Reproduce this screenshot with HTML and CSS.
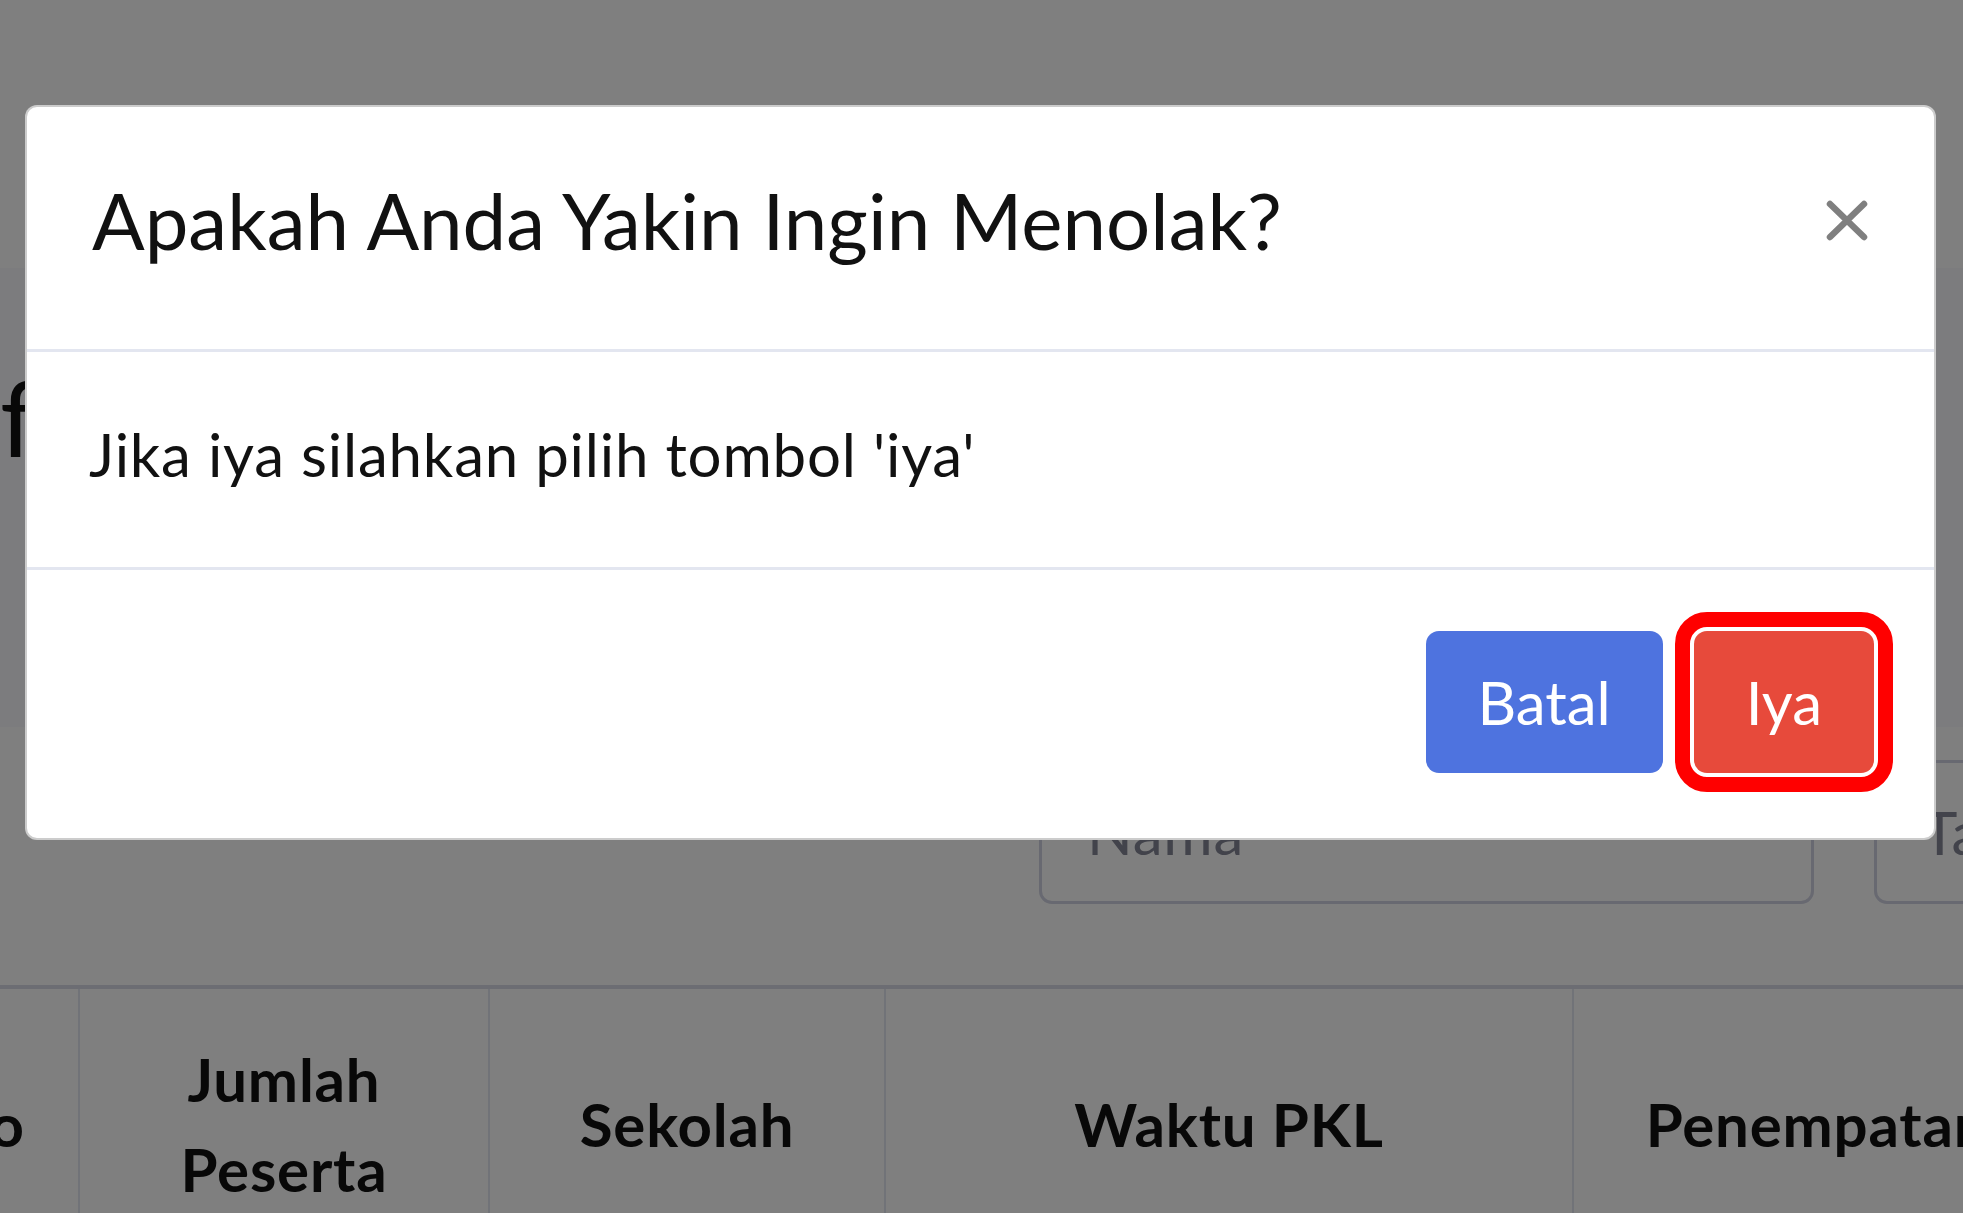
FILE: index.html
```html
<!DOCTYPE html>
<html>
<head>
    <title>Data Pengajuan PKL</title>
    <link rel="stylesheet" href="styles.css">
</head>
<body>
    <div class="topbar"></div>
    <div class="content">
        <h1 class="page-title">f</h1>
    </div>
    <div class="card">
        <div class="filters">
            <input type="text" class="form-control" placeholder="Nama">
            <input type="text" class="form-control" placeholder="Tanggal">
        </div>
        <table class="table">
            <thead>
                <tr>
                    <th class="col-no">No</th>
                    <th class="col-jumlah">Jumlah Peserta</th>
                    <th class="col-sekolah">Sekolah</th>
                    <th class="col-waktu">Waktu PKL</th>
                    <th class="col-penempatan">Penempatan</th>
                </tr>
            </thead>
        </table>
    </div>

    <div class="backdrop"></div>

    <div class="modal">
        <div class="modal-dialog">
            <div class="modal-content">
                <div class="modal-header">
                    <h5 class="modal-title">Apakah Anda Yakin Ingin Menolak?</h5>
                    <button type="button" class="close" aria-label="Close">
                        <svg width="42" height="41" viewBox="0 0 42 41">
                            <path d="M4 4 L38 37 M38 4 L4 37" stroke="#7f7f7f" stroke-width="6.5" stroke-linecap="round" fill="none"/>
                        </svg>
                    </button>
                </div>
                <div class="modal-body">Jika iya silahkan pilih tombol 'iya'</div>
                <div class="modal-footer">
                    <button type="button" class="btn btn-primary">Batal</button>
                    <button type="button" class="btn btn-danger btn-marked">Iya</button>
                </div>
            </div>
        </div>
    </div>
</body>
</html>
```

FILE: styles.css
```css
body {
    margin: 0;
    font-family: 'Lato', 'Open Sans', sans-serif;
    background-color: #f8f9fc;
    overflow: hidden;
    height: 1213px;
}

.topbar {
    height: 268px;
    background-color: #fff;
}

.content {
    height: 459px;
    background-color: #f8f9fc;
}

.page-title {
    margin: 0;
    padding-top: 85px;
    font-size: 105px;
    font-weight: 400;
    line-height: 1.2;
    color: #111;
}

.card {
    background-color: #fff;
    padding-top: 33px;
    height: 453px;
}

.filters {
    display: flex;
    gap: 60px;
    padding-left: 1039px;
}

.form-control {
    flex: none;
    width: 775px;
    height: 144px;
    box-sizing: border-box;
    padding: 0 45px;
    font-family: inherit;
    font-size: 60px;
    letter-spacing: 0.8px;
    border: 3px solid #d1d3e2;
    border-radius: 13px;
    background-color: #fff;
}

.form-control::placeholder {
    color: #858796;
}

.table {
    margin-top: 81px;
    margin-left: -112px;
    border-collapse: collapse;
    table-layout: fixed;
    width: 2172px;
}

.table th {
    box-sizing: border-box;
    padding: 45px;
    font-size: 60px;
    font-weight: 700;
    letter-spacing: 0.8px;
    line-height: 1.5;
    color: #111;
    text-align: center;
    vertical-align: middle;
    border-top: 4px solid #d9dbe6;
    border-left: 2px solid #e3e6f0;
    border-right: 2px solid #e3e6f0;
}

.col-no { width: 190px; }
.col-jumlah { width: 410px; }
.col-sekolah { width: 396px; }
.col-waktu { width: 688px; }
.col-penempatan { width: 488px; }

.backdrop {
    position: fixed;
    inset: 0;
    background-color: rgba(0, 0, 0, 0.5);
}

.modal {
    position: fixed;
    inset: 0;
}

.modal-dialog {
    margin: 105px 27px 0 25px;
}

.modal-content {
    background-color: #fff;
    border: 2px solid rgba(0, 0, 0, 0.2);
    border-radius: 12px;
}

.modal-header {
    display: flex;
    align-items: center;
    justify-content: space-between;
    padding: 55px 66px 70px 65px;
    border-bottom: 3px solid #e3e6f0;
}

.modal-title {
    margin: 0;
    font-size: 78px;
    font-weight: 400;
    line-height: 1.5;
    color: #111;
}

.close {
    padding: 0;
    border: none;
    background: none;
    display: flex;
    cursor: pointer;
}

.modal-body {
    padding: 57px 62px 68px;
    font-size: 60px;
    letter-spacing: 0.8px;
    line-height: 1.5;
    color: #111;
    border-bottom: 3px solid #e3e6f0;
}

.modal-footer {
    display: flex;
    justify-content: flex-end;
    gap: 31px;
    padding: 61px 60px 65px;
}

.btn {
    height: 142px;
    padding: 0 52px;
    font-family: inherit;
    font-size: 60px;
    line-height: 1.5;
    color: #fff;
    border: none;
    border-radius: 13px;
    cursor: pointer;
}

.btn-primary {
    background-color: #4e73df;
}

.btn-danger {
    background-color: #e74a3b;
}

.btn-marked {
    outline: 15px solid #ff0000;
    outline-offset: 4px;
}
```
